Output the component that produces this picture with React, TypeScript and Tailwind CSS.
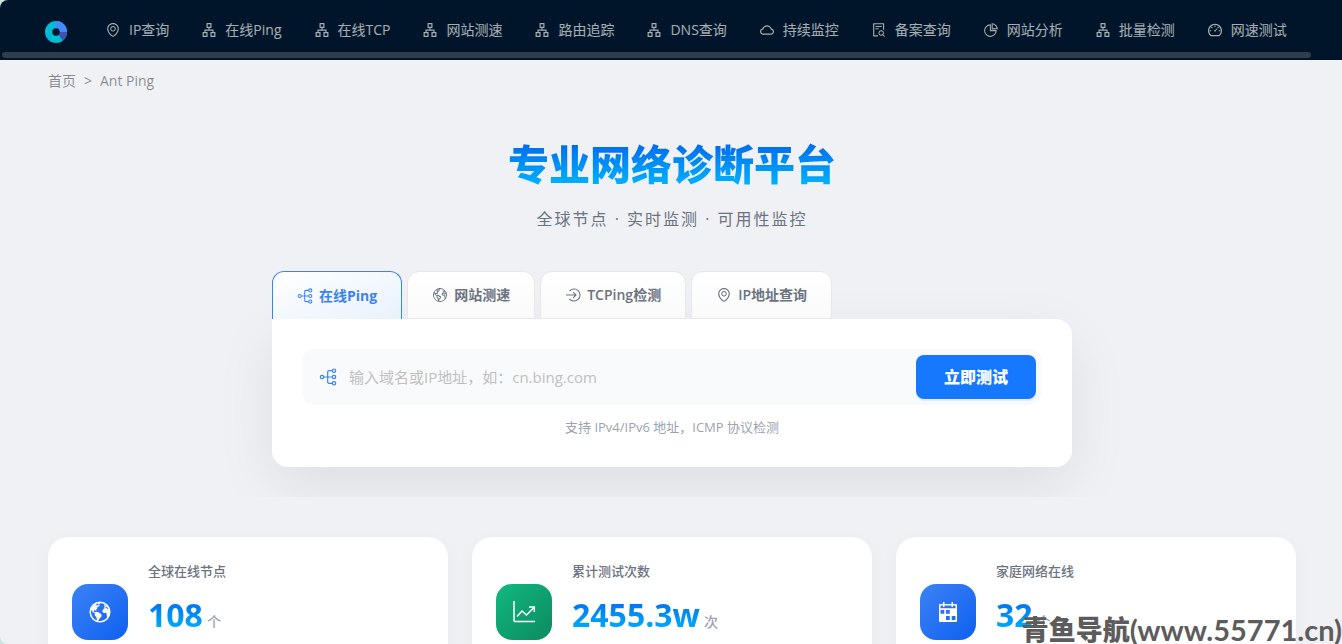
import { useState } from 'react';
import type { ComponentType } from 'react';
import {
  AiOutlineApartment,
  AiOutlineCloud,
  AiOutlineDashboard,
  AiOutlineEnvironment,
  AiOutlineFileSearch,
  AiOutlinePieChart,
} from 'react-icons/ai';
import { IoEarth, IoEarthOutline } from 'react-icons/io5';

type Icon = ComponentType<{ className?: string }>;

const NodesIcon: Icon = ({ className }) => (
  <svg viewBox="0 0 18 18" className={className} fill="none" stroke="currentColor" strokeWidth="1.2">
    <circle cx="3" cy="9" r="1.7" />
    <circle cx="15" cy="2.7" r="1.7" />
    <circle cx="15" cy="9" r="1.7" />
    <circle cx="15" cy="15.3" r="1.7" />
    <path d="M4.7 9h8.6M13.3 2.7H10a1.3 1.3 0 0 0-1.3 1.3v10a1.3 1.3 0 0 0 1.3 1.3h3.3" />
  </svg>
);

const EnterIcon: Icon = ({ className }) => (
  <svg viewBox="0 0 16 16" className={className} fill="none" stroke="currentColor" strokeWidth="1.1">
    <path d="M4.4 4.2a6 6 0 1 1 0 7.6" />
    <path d="M1 8h9.8M8.2 5.2L11 8l-2.8 2.8" />
  </svg>
);

const ChartIcon: Icon = ({ className }) => (
  <svg viewBox="0 0 24 24" className={className} fill="none" stroke="currentColor" strokeWidth="1.5">
    <path d="M2 1v19.5a1 1 0 0 0 1 1h20" />
    <path d="M5 16.5l5-5.5 4.5 4L22 7.5" />
    <path d="M17 7h5.3v5" />
  </svg>
);

const CalendarIcon: Icon = ({ className }) => (
  <svg viewBox="0 0 20 20" className={className} fill="currentColor">
    <path
      fillRule="evenodd"
      d="M5 0h1.5v2h7V0H15v2h3a1 1 0 0 1 1 1v16a1 1 0 0 1-1 1H2a1 1 0 0 1-1-1V3a1 1 0 0 1 1-1h3zM2.5 3.5v2.8h15V3.5H15V5h-1.5V3.5h-7V5H5V3.5zM2.5 8v3.7h3.8V8zM8 8v3.7h3.8V8zM8 14v4h3.8v-4zM13.7 14v4h3.8v-4z"
    />
  </svg>
);

const navItems: { label: string; icon: Icon }[] = [
  { label: 'IP查询', icon: AiOutlineEnvironment },
  { label: '在线Ping', icon: AiOutlineApartment },
  { label: '在线TCP', icon: AiOutlineApartment },
  { label: '网站测速', icon: AiOutlineApartment },
  { label: '路由追踪', icon: AiOutlineApartment },
  { label: 'DNS查询', icon: AiOutlineApartment },
  { label: '持续监控', icon: AiOutlineCloud },
  { label: '备案查询', icon: AiOutlineFileSearch },
  { label: '网站分析', icon: AiOutlinePieChart },
  { label: '批量检测', icon: AiOutlineApartment },
  { label: '网速测试', icon: AiOutlineDashboard },
];

const tabs: { label: string; icon: Icon }[] = [
  { label: '在线Ping', icon: NodesIcon },
  { label: '网站测速', icon: IoEarthOutline },
  { label: 'TCPing检测', icon: EnterIcon },
  { label: 'IP地址查询', icon: AiOutlineEnvironment },
];

const stats = [
  {
    label: '全球在线节点',
    value: '108',
    unit: '个',
    icon: <IoEarth className="w-6 h-6" />,
    tile: 'bg-linear-to-br from-[#3b82f6] to-[#0b60f0]',
  },
  {
    label: '累计测试次数',
    value: '2455.3w',
    unit: '次',
    icon: <ChartIcon className="w-6 h-6" />,
    tile: 'bg-linear-to-br from-[#10b981] to-[#0d8a60]',
  },
  {
    label: '家庭网络在线',
    value: '32',
    unit: '个',
    icon: <CalendarIcon className="w-5 h-5" />,
    tile: 'bg-linear-to-br from-[#3b82f6] to-[#0b60f0]',
  },
];

function Logo() {
  return (
    <svg viewBox="0 0 22 22" className="w-[22px] h-[22px]">
      <circle cx="11" cy="11" r="11" fill="#00bcd4" />
      <path d="M11 11V0a11 11 0 0 1 11 11z" fill="#448aff" />
      <path d="M11 11h11a11 11 0 0 1-4 8.5z" fill="#3f51b5" />
      <circle cx="11" cy="11" r="3.7" fill="#001529" />
    </svg>
  );
}

function App() {
  const [active, setActive] = useState(0);

  return (
    <div className="h-screen overflow-hidden bg-[#cfe3e3] font-['Open_Sans','Noto_Sans_CJK_SC',sans-serif]">
      <div className="relative h-full overflow-hidden rounded-l-lg bg-[#f0f1f5]">
        {/* Top navigation */}
        <header className="bg-[#001529] overflow-hidden pb-0.5">
          <div className="flex items-center h-[50px] pt-2.5 pl-[45px]">
            <a href="#" aria-label="Ant Ping" className="shrink-0 pt-1">
              <Logo />
            </a>
            <nav className="flex pl-[22px]">
              {navItems.map(({ label, icon: Icon }) => (
                <a
                  key={label}
                  href="#"
                  className="flex items-center gap-2 px-4 text-sm whitespace-nowrap text-white/65 hover:text-white"
                >
                  <Icon className="w-4 h-4" />
                  {label}
                </a>
              ))}
            </nav>
          </div>
          <div className="mt-0.5 ml-0.5 mr-[31px] h-1.5 rounded-full bg-[#303c4b]" />
        </header>

        {/* Breadcrumb */}
        <div className="flex gap-2 px-12 pt-[11px] text-sm text-black/45">
          <a href="#">首页</a>
          <span>&gt;</span>
          <span>Ant Ping</span>
        </div>

        {/* Hero */}
        <section className="overflow-hidden pl-[18px] pr-4 pt-12 pb-[30px]">
          <h1 className="text-center text-[41px] leading-[50px] font-extrabold text-transparent bg-clip-text bg-linear-to-b from-[#0062ea] to-[#00b8ff]">
            专业网络诊断平台
          </h1>
          <p className="mt-[18px] text-center text-base leading-6 tracking-[2px] text-[#6b7280]">
            全球节点 · 实时监测 · 可用性监控
          </p>

          <div className="max-w-[800px] mx-auto mt-10">
            <div className="flex gap-[5px]">
              {tabs.map(({ label, icon: Icon }, index) => (
                <button
                  key={label}
                  onClick={() => setActive(index)}
                  className={
                    index === active
                      ? 'flex items-center gap-1.5 h-12 px-6 rounded-t-xl border border-b-0 border-[#3b82f6] bg-linear-to-br from-white to-[#e8f2fc] text-sm font-bold text-[#3b82f6]'
                      : 'flex items-center gap-1.5 h-12 px-6 rounded-t-xl border border-[#e5e7eb] bg-linear-to-b from-white to-[#fafafa] text-sm font-semibold text-[#6b7280]'
                  }
                >
                  <Icon className="w-4 h-4" />
                  {label}
                </button>
              ))}
            </div>
            <div className="rounded-2xl rounded-tl-none bg-white p-[30px] shadow-[0_20px_60px_rgba(0,0,0,0.08)]">
              <form
                onSubmit={(e) => e.preventDefault()}
                className="flex items-center rounded-xl bg-[#f9fafc] p-1.5 pl-[17px]"
              >
                <label htmlFor="target" className="text-[#3b82f6]">
                  <NodesIcon className="w-[18px] h-[18px]" />
                </label>
                <input
                  id="target"
                  type="text"
                  placeholder="输入域名或IP地址，如：cn.bing.com"
                  className="flex-1 min-w-0 px-3 text-[15px] outline-none placeholder:text-[#bfbfbf]"
                />
                <button
                  type="submit"
                  className="h-11 w-[120px] rounded-lg bg-[#1677ff] text-base font-extrabold text-white shadow-[0_2px_0_rgba(5,145,255,0.1)]"
                >
                  立即测试
                </button>
              </form>
              <p className="mt-3 text-center text-[13px] leading-5 text-[#9ca3af]">
                支持 IPv4/IPv6 地址，ICMP 协议检测
              </p>
            </div>
          </div>
        </section>

        {/* Stats */}
        <section className="grid grid-cols-3 gap-6 pl-12 pt-10 pr-[46px]">
          {stats.map((stat) => (
            <div
              key={stat.label}
              className="flex items-start gap-5 rounded-[20px] bg-white p-6 shadow-[0_4px_20px_rgba(0,0,0,0.04)]"
            >
              <div
                className={`flex items-center justify-center shrink-0 mt-[23px] w-14 h-14 rounded-2xl text-white ${stat.tile}`}
              >
                {stat.icon}
              </div>
              <div>
                <div className="text-[13px] leading-5 font-medium text-[#6b7280]">{stat.label}</div>
                <div className="flex items-baseline gap-1 mt-3.5">
                  <span className="text-[32px] leading-10 font-bold text-transparent bg-clip-text bg-linear-to-b from-[#0062ea] to-[#00b8ff]">
                    {stat.value}
                  </span>
                  <span className="text-sm font-medium text-[#9ca3af]">{stat.unit}</span>
                </div>
              </div>
            </div>
          ))}
        </section>

        {/* Watermark */}
        <div className="absolute right-0 bottom-0 flex items-center leading-7 text-[#5c5c5c] whitespace-nowrap">
          <span className="text-[27px] font-black">青鱼导航</span>
          <span className="font-['Lato',sans-serif] text-[29px] font-bold">(www.55771.cn)</span>
        </div>
      </div>
    </div>
  );
}

export default App;
